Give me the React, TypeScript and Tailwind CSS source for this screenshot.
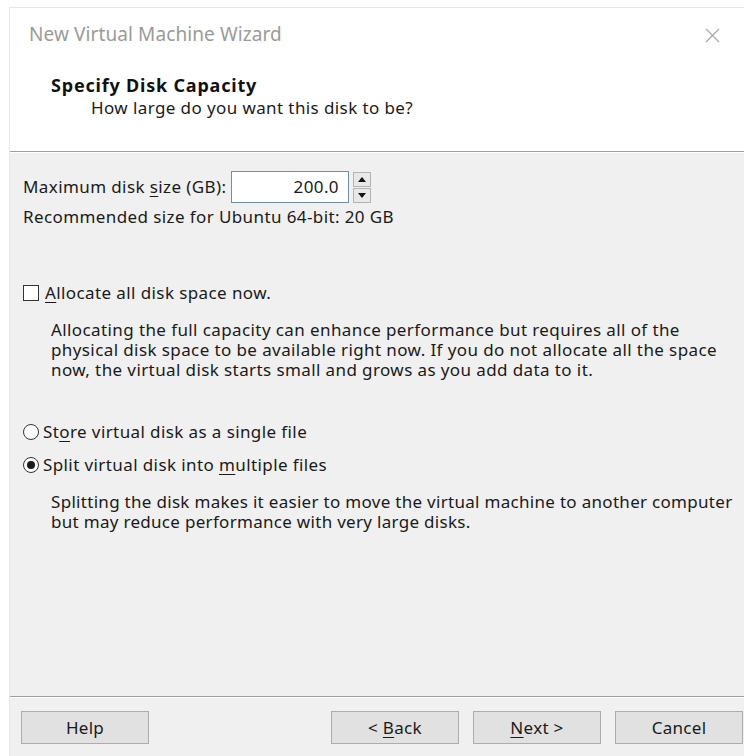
import React from "react";

const font = { fontFamily: '"Noto Sans", "Open Sans", sans-serif' };

function U({ children }: { children: React.ReactNode }) {
  return <span className="underline underline-offset-[3px] decoration-1">{children}</span>;
}

function Btn({ children, className = "" }: { children: React.ReactNode; className?: string }) {
  return (
    <div
      className={`h-[33px] w-[128px] border border-[#adadad] bg-[#e1e1e1] flex items-center justify-center text-[17px] tracking-[0.3px] text-[#1a1a1a] whitespace-pre ${className}`}
    >
      {children}
    </div>
  );
}

export default function App() {
  return (
    <div className="w-[744px] h-[756px] bg-white pt-[7px] pl-[9px] overflow-hidden" style={font}>
      <div className="h-[749px] border-t border-l border-[#e6e6e6] flex flex-col">
        {/* title bar */}
        <div className="h-[52px] flex items-center justify-between pl-[19px] pr-[24px] pt-[1px]">
          <span className="text-[19px] text-[#9a9a9a] tracking-[0.1px]">New Virtual Machine Wizard</span>
          <svg width="15" height="15" viewBox="0 0 15 15" className="mt-[1px]">
            <path d="M1 1 L14 14 M14 1 L1 14" stroke="#a8a8a8" strokeWidth="1.2" />
          </svg>
        </div>
        {/* header */}
        <div className="h-[91px] pl-[41px] pt-[13px]">
          <div className="text-[18px] font-bold text-[#111] leading-[24px] tracking-[0.8px]">
            Specify Disk Capacity
          </div>
          <div className="text-[17px] tracking-[0.4px] text-[#1a1a1a] leading-[22px] pl-[40px]">
            How large do you want this disk to be?
          </div>
        </div>
        <div className="h-[2px] border-t border-[#a0a0a0] bg-white" />
        {/* body */}
        <div className="flex-1 bg-[#f0f0f0] pl-[13px] text-[17px] tracking-[0.4px] text-[#1a1a1a] whitespace-nowrap">
          <div className="flex items-center mt-[18px] h-[32px]">
            <span className="w-[208px]">
              Maximum disk <U>s</U>ize (GB):
            </span>
            <div className="h-[32px] w-[118px] border border-[#6f8fa3] bg-white flex items-center justify-end pr-[9px]">
              200.0
            </div>
            <div className="ml-[4px] flex flex-col gap-[1px]">
              <div className="h-[15px] w-[18px] border border-[#b4b4b4] bg-[#e8e8e8] flex items-center justify-center">
                <svg width="8" height="5" viewBox="0 0 8 5"><path d="M0 5 L4 0 L8 5 Z" fill="#111" /></svg>
              </div>
              <div className="h-[15px] w-[18px] border border-[#b4b4b4] bg-[#e8e8e8] flex items-center justify-center">
                <svg width="8" height="5" viewBox="0 0 8 5"><path d="M0 0 L4 5 L8 0 Z" fill="#111" /></svg>
              </div>
            </div>
          </div>
          <div className="mt-[2px] leading-[24px]">Recommended size for Ubuntu 64-bit: 20 GB</div>

          <div className="flex items-center mt-[53px] h-[22px]">
            <div className="w-[16px] h-[16px] border border-[#333] bg-white" />
            <span className="ml-[6px]">
              <U>A</U>llocate all disk space now.
            </span>
          </div>
          <div className="pl-[28px] mt-[16px] leading-[20px]">
            Allocating the full capacity can enhance performance but requires all of the
            <br />
            physical disk space to be available right now. If you do not allocate all the space
            <br />
            now, the virtual disk starts small and grows as you add data to it.
          </div>

          <div className="flex items-center mt-[41px] h-[22px]">
            <div className="w-[16px] h-[16px] rounded-full border border-[#333] bg-white" />
            <span className="ml-[4px]">
              St<U>o</U>re virtual disk as a single file
            </span>
          </div>
          <div className="flex items-center mt-[11px] h-[22px]">
            <div className="w-[16px] h-[16px] rounded-full border border-[#333] bg-white flex items-center justify-center">
              <div className="w-[8px] h-[8px] rounded-full bg-[#1a1a1a]" />
            </div>
            <span className="ml-[4px]">
              Split virtual disk into <U>m</U>ultiple files
            </span>
          </div>
          <div className="pl-[28px] mt-[16px] leading-[20px] tracking-[0.3px]">
            Splitting the disk makes it easier to move the virtual machine to another computer
            <br />
            but may reduce performance with very large disks.
          </div>
        </div>
        {/* footer */}
        <div className="h-[2px] border-t border-[#a0a0a0] bg-white" />
        <div className="h-[58px] bg-[#f0f0f0] flex items-start pt-[13px] pl-[11px]">
          <Btn>Help</Btn>
          <Btn className="ml-[182px]">
            {"< "}
            <U>B</U>
            {"ack"}
          </Btn>
          <Btn className="ml-[14px]">
            <U>N</U>
            {"ext >"}
          </Btn>
          <Btn className="ml-[14px]">Cancel</Btn>
        </div>
      </div>
    </div>
  );
}
